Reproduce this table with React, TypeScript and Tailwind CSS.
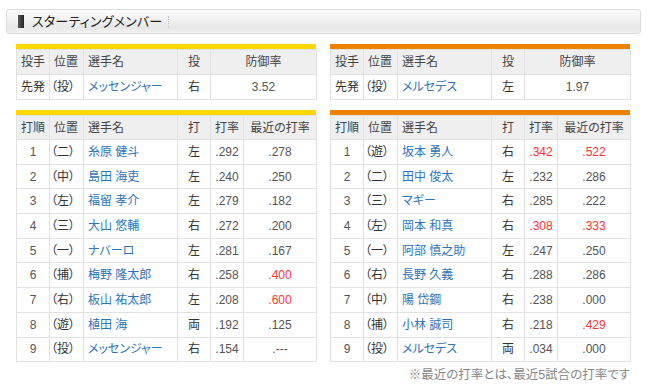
type Batter = { no: number; pos: string; name: string; hand: string; avg: string; recent: string; avgHot?: boolean; recentHot?: boolean }
type Team = { bar: string; pitcher: { pos: string; name: string; hand: string; era: string }; batters: Batter[] }

const teams: Team[] = [
  {
    bar: 'border-[#ffd800]',
    pitcher: { pos: '（投）', name: 'メッセンジャー', hand: '右', era: '3.52' },
    batters: [
      { no: 1, pos: '（二）', name: '糸原 健斗', hand: '左', avg: '.292', recent: '.278' },
      { no: 2, pos: '（中）', name: '島田 海吏', hand: '左', avg: '.240', recent: '.250' },
      { no: 3, pos: '（左）', name: '福留 孝介', hand: '左', avg: '.279', recent: '.182' },
      { no: 4, pos: '（三）', name: '大山 悠輔', hand: '右', avg: '.272', recent: '.200' },
      { no: 5, pos: '（一）', name: 'ナバーロ', hand: '左', avg: '.281', recent: '.167' },
      { no: 6, pos: '（捕）', name: '梅野 隆太郎', hand: '右', avg: '.258', recent: '.400', recentHot: true },
      { no: 7, pos: '（右）', name: '板山 祐太郎', hand: '左', avg: '.208', recent: '.600', recentHot: true },
      { no: 8, pos: '（遊）', name: '植田 海', hand: '両', avg: '.192', recent: '.125' },
      { no: 9, pos: '（投）', name: 'メッセンジャー', hand: '右', avg: '.154', recent: '.---' },
    ],
  },
  {
    bar: 'border-[#ef8200]',
    pitcher: { pos: '（投）', name: 'メルセデス', hand: '左', era: '1.97' },
    batters: [
      { no: 1, pos: '（遊）', name: '坂本 勇人', hand: '右', avg: '.342', recent: '.522', avgHot: true, recentHot: true },
      { no: 2, pos: '（二）', name: '田中 俊太', hand: '左', avg: '.232', recent: '.286' },
      { no: 3, pos: '（三）', name: 'マギー', hand: '右', avg: '.285', recent: '.222' },
      { no: 4, pos: '（左）', name: '岡本 和真', hand: '右', avg: '.308', recent: '.333', avgHot: true, recentHot: true },
      { no: 5, pos: '（一）', name: '阿部 慎之助', hand: '左', avg: '.247', recent: '.250' },
      { no: 6, pos: '（右）', name: '長野 久義', hand: '右', avg: '.288', recent: '.286' },
      { no: 7, pos: '（中）', name: '陽 岱鋼', hand: '右', avg: '.238', recent: '.000' },
      { no: 8, pos: '（捕）', name: '小林 誠司', hand: '右', avg: '.218', recent: '.429', recentHot: true },
      { no: 9, pos: '（投）', name: 'メルセデス', hand: '両', avg: '.034', recent: '.000' },
    ],
  },
]

const cell = 'border border-[#e2e2e2] p-0 whitespace-nowrap overflow-hidden'
const head = `${cell} bg-[#efefef] text-[#444]`
const num = (hot?: boolean) => (hot ? 'text-[#ff3333]' : 'text-[#555]')

function Cols({ pitcher }: { pitcher?: boolean }) {
  return (
    <colgroup>
      <col className="w-[33px]" />
      <col className="w-[34px]" />
      <col className="w-[94px]" />
      <col className="w-[33px]" />
      {pitcher ? (
        <col className="w-[106px]" />
      ) : (
        <>
          <col className="w-[33px]" />
          <col className="w-[73px]" />
        </>
      )}
    </colgroup>
  )
}

function PitcherTable({ team }: { team: Team }) {
  const p = team.pitcher
  return (
    <div className={`w-[300px] border-t-[5px] ${team.bar}`}>
      <table className="w-full table-fixed border-collapse text-[12px]">
        <Cols pitcher />
        <thead>
          <tr className="h-[25px]">
            <th className={`${head} pl-[4px] text-left font-normal`}>投手</th>
            <th className={`${head} pl-[4px] text-left font-normal`}>位置</th>
            <th className={`${head} pl-[4px] text-left font-normal`}>選手名</th>
            <th className={`${head} text-center font-normal`}>投</th>
            <th className={`${head} text-center font-normal`}>防御率</th>
          </tr>
        </thead>
        <tbody>
          <tr className="h-[25px]">
            <td className={`${cell} pl-[4px] text-[#333]`}>先発</td>
            <td className={`${cell} pl-[1px] text-[#333]`}>{p.pos}</td>
            <td className={`${cell} pl-[4px] text-[#2d74b9]`}>{p.name}</td>
            <td className={`${cell} text-center text-[#333]`}>{p.hand}</td>
            <td className={`${cell} text-center text-[#555]`}>{p.era}</td>
          </tr>
        </tbody>
      </table>
    </div>
  )
}

function BattingTable({ team }: { team: Team }) {
  return (
    <div className={`w-[300px] border-t-[5px] ${team.bar}`}>
      <table className="w-full table-fixed border-collapse text-[12px]">
        <Cols />
        <thead>
          <tr className="h-[24px]">
            <th className={`${head} pl-[4px] text-left font-normal`}>打順</th>
            <th className={`${head} pl-[4px] text-left font-normal`}>位置</th>
            <th className={`${head} pl-[4px] text-left font-normal`}>選手名</th>
            <th className={`${head} text-center font-normal`}>打</th>
            <th className={`${head} text-center font-normal`}>打率</th>
            <th className={`${head} text-center font-normal`}>最近の打率</th>
          </tr>
        </thead>
        <tbody>
          {team.batters.map((b) => (
            <tr key={b.no} className="h-[24.7px]">
              <td className={`${cell} text-center text-[#555]`}>{b.no}</td>
              <td className={`${cell} pl-[1px] text-[#333]`}>{b.pos}</td>
              <td className={`${cell} pl-[4px] text-[#2d74b9]`}>{b.name}</td>
              <td className={`${cell} text-center text-[#333]`}>{b.hand}</td>
              <td className={`${cell} text-center ${num(b.avgHot)}`}>{b.avg}</td>
              <td className={`${cell} text-center ${num(b.recentHot)}`}>{b.recent}</td>
            </tr>
          ))}
        </tbody>
      </table>
    </div>
  )
}

export default function App() {
  return (
    <div className="w-[650px] h-[389px] bg-white pt-[9px] font-['Liberation_Sans','Noto_Sans_CJK_JP',sans-serif] [font-feature-settings:'palt']">
      <div className="ml-[6px] w-[635px] h-[25px] rounded-[3px] border border-[#dcdcdc] bg-[linear-gradient(#fbfbfb,#f4f4f4_35%,#e7e7e7_75%,#f1f1f1)] flex items-center">
        <span className="ml-[11px] w-[6px] h-[13px] bg-[linear-gradient(90deg,#5a5a5a,#222)]" />
        <span className="ml-[8px] text-[13px] text-[#222] tracking-[0.2px]">スターティングメンバー</span>
        <span className="ml-[6px] h-[12px] border-l border-dotted border-[#c4c4c4]" />
      </div>

      <div className="mt-[10px] ml-[16px] flex gap-[14px]">
        {teams.map((t, i) => (
          <div key={i} className="flex flex-col gap-[10px]">
            <PitcherTable team={t} />
            <BattingTable team={t} />
          </div>
        ))}
      </div>

      <p className="mt-[4px] w-[630px] text-right text-[12.5px] text-[#888]">※最近の打率とは、最近5試合の打率です</p>
    </div>
  )
}
